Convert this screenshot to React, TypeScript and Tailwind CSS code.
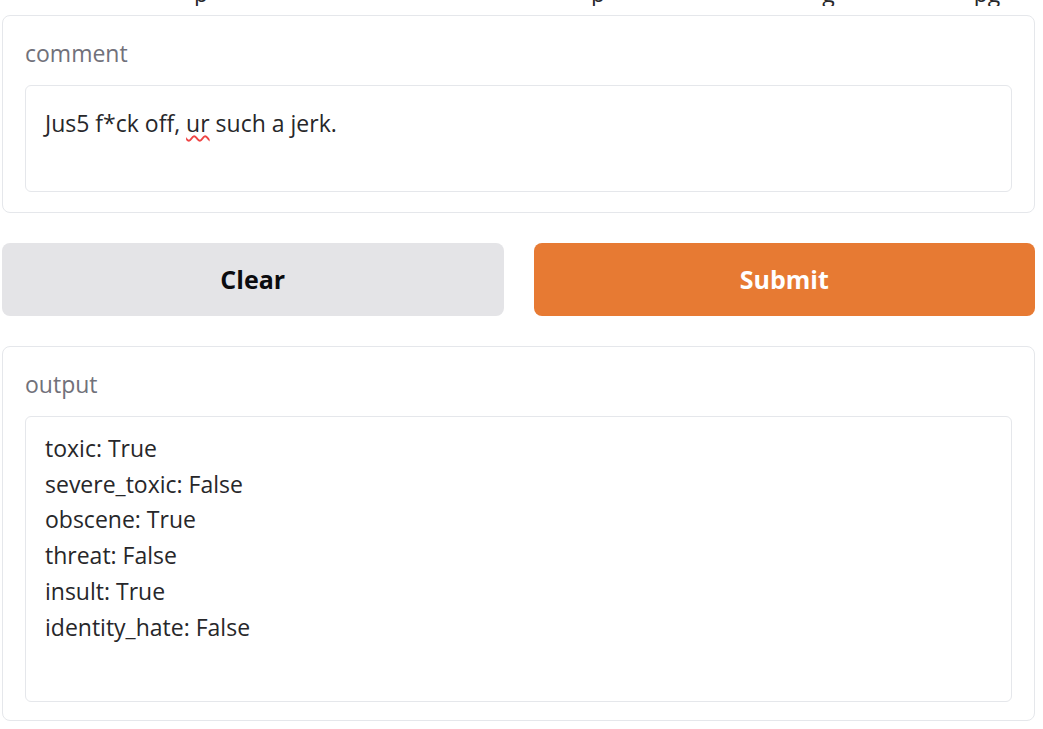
import React from "react";

const lines = [
  "toxic: True",
  "severe_toxic: False",
  "obscene: True",
  "threat: False",
  "insult: True",
  "identity_hate: False",
];

export default function App() {
  return (
    <div
      className="w-[1043px] h-[729px] bg-white overflow-hidden text-[#27272a]"
      style={{ fontFamily: "'Open Sans', 'Noto Sans', sans-serif" }}
    >
      {/* cut-off text line above */}
      <div className="h-[6px] overflow-hidden">
        <div className="flex -mt-[22px] text-[23px] leading-[30px] text-[#27272a]">
          <span className="ml-[194px]">p</span>
          <span className="ml-[383px]">p</span>
          <span className="ml-[217px]">g</span>
          <span className="ml-[139px]">pg</span>
        </div>
      </div>

      <div className="mt-[9px] mx-[2px] w-[1033px] border border-[#e5e7eb] rounded-[8px] px-[22px] pt-[19px] pb-[20px]">
        <div className="text-[23px] leading-[36px] text-[#71717a] mb-[14px]">comment</div>
        <div className="h-[107px] border border-[#e5e7eb] rounded-[6px] px-[19px] pt-[19px] text-[23px] leading-[36px]">
          Jus5 f*ck off,{" "}
          <span className="underline decoration-wavy decoration-[#ef4444] underline-offset-[3px] decoration-[1.5px]">ur</span>{" "}
          such a jerk.
        </div>
      </div>

      <div className="mt-[30px] mx-[2px] w-[1033px] grid grid-cols-2 gap-[30px]">
        <button className="h-[73px] rounded-[8px] bg-[#e4e4e7] text-[25px] font-bold text-[#0b0b0f]">
          Clear
        </button>
        <button className="h-[73px] rounded-[8px] bg-[#e77a33] text-[25px] font-bold text-white">
          Submit
        </button>
      </div>

      <div className="mt-[30px] mx-[2px] w-[1033px] border border-[#e5e7eb] rounded-[8px] px-[22px] pt-[19px] pb-[18px]">
        <div className="text-[23px] leading-[36px] text-[#71717a] mb-[14px]">output</div>
        <div className="h-[286px] border border-[#e5e7eb] rounded-[6px] px-[19px] pt-[14px] text-[23px] leading-[35.7px]">
          {lines.map((l) => (
            <div key={l}>{l}</div>
          ))}
        </div>
      </div>
    </div>
  );
}
